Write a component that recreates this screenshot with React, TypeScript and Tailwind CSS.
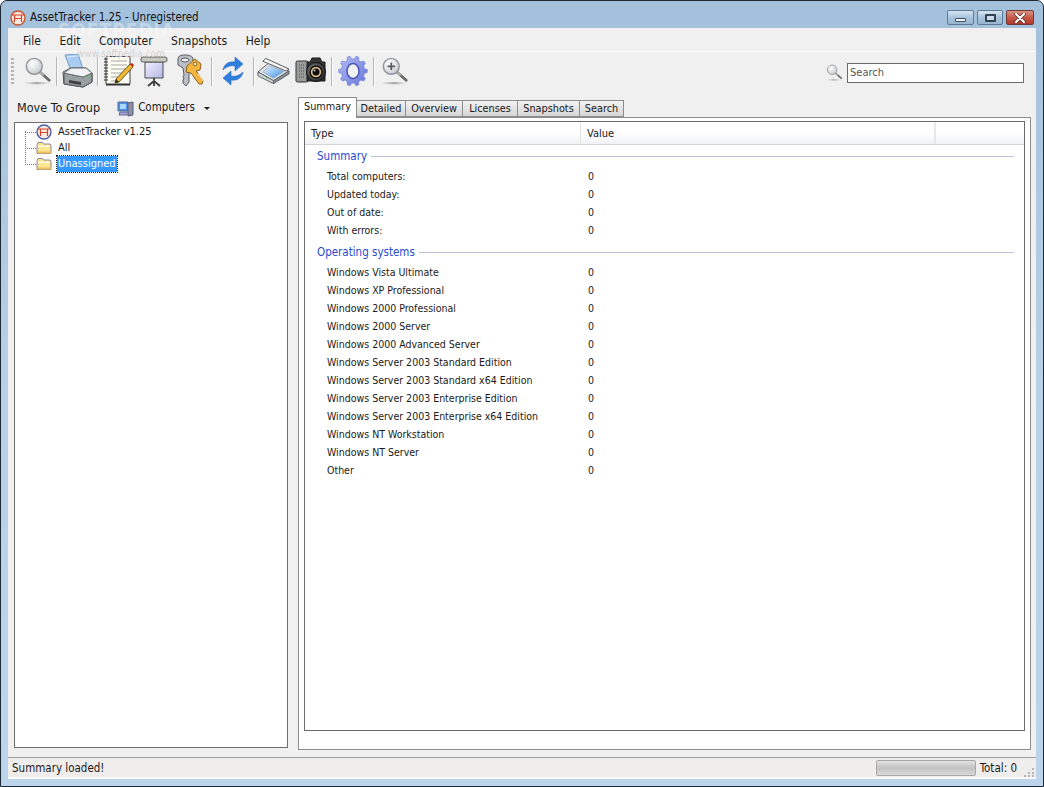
import type { ReactNode } from "react";

const summaryRows = ["Total computers:", "Updated today:", "Out of date:", "With errors:"];
const osRows = [
  "Windows Vista Ultimate",
  "Windows XP Professional",
  "Windows 2000 Professional",
  "Windows 2000 Server",
  "Windows 2000 Advanced Server",
  "Windows Server 2003 Standard Edition",
  "Windows Server 2003 Standard x64 Edition",
  "Windows Server 2003 Enterprise Edition",
  "Windows Server 2003 Enterprise x64 Edition",
  "Windows NT Workstation",
  "Windows NT Server",
  "Other",
];
const tabs = [
  { label: "Detailed", w: "w-[49px]" },
  { label: "Overview", w: "w-[57px]" },
  { label: "Licenses", w: "w-[55px]" },
  { label: "Snapshots", w: "w-[62px]" },
  { label: "Search", w: "w-[44px]" },
];

// gear outline, 10 teeth
const gearPath = (() => {
  const pts: string[] = [];
  const n = 10;
  for (let i = 0; i < n; i++) {
    const a = (i / n) * Math.PI * 2;
    const step = (Math.PI * 2) / n;
    [
      [a - step * 0.3, 12.2],
      [a - step * 0.16, 15],
      [a + step * 0.16, 15],
      [a + step * 0.3, 12.2],
    ].forEach(([ang, r]) => {
      pts.push(`${(15 + Math.cos(ang) * r * 0.95).toFixed(1)} ${(16 + Math.sin(ang) * r).toFixed(1)}`);
    });
  }
  return "M" + pts.join("L") + "z";
})();

function Logo({ ring }: { ring: string }) {
  return (
    <svg width="16" height="16" viewBox="0 0 16 16">
      <circle cx="8" cy="8" r="7" fill="#f8eadf" stroke={ring} strokeWidth="1.400" />
      <path d="M1.500 5h13M4.500 5v7M11.500 5v7M4.500 8.500h7" stroke="#d8432b" strokeWidth="1.200" fill="none" />
    </svg>
  );
}

function Folder() {
  return (
    <svg width="16" height="14" viewBox="0 0 16 14">
      <path d="M1 3.500 2 1.500h4.500l1 1.500H14l1 1v8.500H1z" fill="#fbe58f" stroke="#8d84a8" />
      <path d="M2 4.500h12v1.500H2z" fill="#fffbe0" />
      <path d="M2 10.500h13v2H2z" fill="#eec25a" />
    </svg>
  );
}

function Magnifier({ plus }: { plus?: boolean }) {
  return (
    <svg width="28" height="32" viewBox="0 0 30 32">
      <defs>
        <radialGradient id={plus ? "lensP" : "lens"} cx="0.35" cy="0.3" r="0.8">
          <stop offset="0" stopColor="#ffffff" />
          <stop offset="1" stopColor="#c4c8cc" />
        </radialGradient>
        <linearGradient id={plus ? "shP" : "sh"} x1="0" x2="1" y1="0" y2="0">
          <stop offset="0" stopColor="#e6e6e6" />
          <stop offset="0.5" stopColor="#a8a8a8" />
          <stop offset="1" stopColor="#ececec" />
        </linearGradient>
      </defs>
      <ellipse cx="14" cy="29" rx="13" ry="1.200" fill={`url(#${plus ? "shP" : "sh"})`} />
      <path d="M17 17 27 26" stroke="#6d6a66" strokeWidth="3" strokeLinecap="round" />
      <path d="M17 17 21 20.600" stroke="#b9b6b2" strokeWidth="2" />
      <circle cx="11" cy="11" r="8.500" fill={`url(#${plus ? "lensP" : "lens"})`} stroke="#8f9499" strokeWidth="1.500" />
      {plus && <path d="M7 11h8M11 7v8" stroke="#55585c" strokeWidth="1.800" />}
    </svg>
  );
}

function Printer() {
  return (
    <svg width="31" height="34" viewBox="0 0 31 34">
      <path d="M3 1 16 0l5 15-12 2z" fill="#a9cdf2" stroke="#7e9cc0" />
      <path d="M5 3 15 2" stroke="#dcecff" />
      <path d="M1 18 9 14h15l6 5v9l-9 5-19-3z" fill="#dfe2e4" stroke="#4d5154" />
      <path d="M2 19 21 23l9-4v9l-9 5-19-3z" fill="#9aa1a4" stroke="#4d5154" />
      <path d="M2 19 21 23l9-4-6-5H9z" fill="#f1f3f4" stroke="#6d7174" />
      <path d="M7 26 19 28v3L7 29z" fill="#3d4143" />
      <circle cx="26" cy="23" r="1" fill="#58c95c" />
    </svg>
  );
}

function Notebook() {
  return (
    <svg width="32" height="32" viewBox="0 0 32 32">
      <rect x="3" y="1.500" width="24" height="28" rx="1" fill="#fdfdf5" stroke="#3e3e3e" />
      <path d="M3 29.500h24" stroke="#333" strokeWidth="2" />
      <path d="M8 6h16M8 10h16M8 14h16M8 18h12M8 22h8M8 26h6" stroke="#a5a59a" />
      <path d="M1 4h4M1 7h4M1 10h4M1 13h4M1 16h4M1 19h4M1 22h4M1 25h4" stroke="#333" strokeWidth="1.200" />
      <path d="M13 24 27 9l3 3-14 15-4 1z" fill="#f0b833" stroke="#6a5120" />
      <path d="M27 9l3 3 1-2-2-2z" fill="#d6262c" />
      <path d="M13 24l-1 4 4-1z" fill="#33302a" />
    </svg>
  );
}

function Presentation() {
  return (
    <svg width="28" height="32" viewBox="0 0 28 32">
      <defs>
        <linearGradient id="screen" x1="0" x2="1" y1="0" y2="1">
          <stop offset="0" stopColor="#f0f0ff" />
          <stop offset="1" stopColor="#b6b8e8" />
        </linearGradient>
      </defs>
      <path d="M5 7h18v16H5z" fill="url(#screen)" stroke="#4a4a4a" />
      <rect x="1" y="2" width="26" height="5" rx="2" fill="#c8c9c0" stroke="#5c5c54" />
      <path d="M14 23v3M14 26l-6 5M14 26l6 5M14 26v5" stroke="#3c3c3c" strokeWidth="1.800" fill="none" />
    </svg>
  );
}

function Keys() {
  return (
    <svg width="30" height="34" viewBox="0 0 30 34">
      <path d="M2 5c0-3 3-4 7-4s8 1 8 4v8l-4 3v12l-3 4-3-3v-3l1-1-1-2 1-2-1-7-5-3z" fill="#bcc0c6" stroke="#565a60" />
      <ellipse cx="9" cy="6" rx="4" ry="2" fill="#eceef0" stroke="#565a60" />
      <path d="M11 12 19 5l6 5-1 6-4 1 7 10-1 3-3 0-8-11-5-1z" fill="#f4b63e" stroke="#8a6118" />
      <circle cx="19" cy="10" r="1.800" fill="#fff3cf" stroke="#8a6118" />
      <path d="M22 20l5 7" stroke="#ffe29a" />
    </svg>
  );
}

function Sync() {
  return (
    <svg width="22" height="28" viewBox="0 0 22 28">
      <path d="M1 13C2 7 7 4 13 5V0l8 7-8 7V9C8 8 4 10 1 13z" fill="#2f7fe0" stroke="#1e5fb8" strokeWidth="0.500" />
      <path d="M21 15c-1 6-6 9-12 8v5l-8-7 8-7v5c5 1 9-1 12-4z" fill="#2f7fe0" stroke="#1e5fb8" strokeWidth="0.500" />
    </svg>
  );
}

function Scanner() {
  return (
    <svg width="33" height="26" viewBox="0 0 34 26">
      <defs>
        <linearGradient id="glass" x1="0" x2="1" y1="0" y2="1">
          <stop offset="0" stopColor="#e8f4ff" />
          <stop offset="1" stopColor="#3f92e4" />
        </linearGradient>
      </defs>
      <path d="M1 14 13 4l20 9-16 10z" fill="#e4e6e8" stroke="#5a6068" />
      <path d="M6 14 13 7.500l15 6-11 7z" fill="url(#glass)" stroke="#7d8a98" strokeWidth="0.500" />
      <path d="M6 3 9 0l24 11-3 2z" fill="#f3f4f4" stroke="#55585c" />
      <path d="M1 14l16 9v3L1 18z" fill="#d4d7da" stroke="#5a6068" />
      <path d="M17 23l16-10v3L17 26z" fill="#8d9196" stroke="#5a6068" />
      <circle cx="10" cy="20" r="0.800" fill="#4ecb55" />
    </svg>
  );
}

function Camera() {
  return (
    <svg width="32" height="28" viewBox="0 0 32 28">
      <defs>
        <radialGradient id="cam" cx="0.4" cy="0.4" r="0.7">
          <stop offset="0" stopColor="#8d8d8d" />
          <stop offset="1" stopColor="#1c1c1c" />
        </radialGradient>
      </defs>
      <rect x="1" y="4" width="12" height="21" rx="1.500" fill="#9a9c9a" stroke="#333" />
      <path d="M4 8h6M4 11h6M4 14h6M4 17h6M4 20h6" stroke="#4c4c4c" strokeDasharray="1 1" />
      <path d="M12 5h3l2-4h8l2 4h3v19H12z" fill="#353535" stroke="#1b1b1b" />
      <circle cx="21" cy="15" r="9.500" fill="url(#cam)" stroke="#111" />
      <circle cx="21" cy="15" r="6" fill="#d4b886" stroke="#101010" strokeWidth="1.500" />
      <circle cx="21" cy="15" r="3.500" fill="#0e0e0e" />
      <circle cx="19.500" cy="13.500" r="1" fill="#b8c8d8" />
    </svg>
  );
}

function Gear() {
  return (
    <svg width="30" height="32" viewBox="0 0 30 32">
      <defs>
        <linearGradient id="gear" x1="0" x2="1" y1="0" y2="1">
          <stop offset="0" stopColor="#b4bef6" />
          <stop offset="1" stopColor="#6674d6" />
        </linearGradient>
      </defs>
      <path d={gearPath} fill="url(#gear)" stroke="#7480d8" strokeWidth="0.800" />
      <ellipse cx="15" cy="16" rx="6" ry="7.500" fill="#f2f2f2" stroke="#4a55b4" strokeWidth="1.500" />
    </svg>
  );
}

function Sep() {
  return <div className="w-[2px] h-[29px] border-l border-[#b5b5b5] bg-white" />;
}

function ToolBtn({ w, children }: { w: string; children: ReactNode }) {
  return <div className={`${w} h-[36px] flex items-center justify-center`}>{children}</div>;
}

function WinButton({ w, red, children }: { w: string; red?: boolean; children: ReactNode }) {
  return (
    <div
      className={`${w} h-[15px] rounded-[2px] border flex items-center justify-center ${
        red
          ? "border-[#6e3a36] bg-gradient-to-b from-[#dc9284] via-[#c65a4b] to-[#b23a2d]"
          : "border-[#5e7b96] bg-gradient-to-b from-[#d6e4f1] via-[#a9c4dc] to-[#97b6d2]"
      }`}
    >
      {children}
    </div>
  );
}

function Group({ label, rows, className }: { label: string; rows: string[]; className: string }) {
  return (
    <>
      <div className={`${className} h-[23px] flex items-center pl-[12px] pr-[10px]`}>
        <span className="text-[#2a4bd0] text-[11.500px]">{label}</span>
        <div className="flex-1 ml-[4px] border-t border-[#b9c4da]" />
      </div>
      {rows.map((r) => (
        <div key={r} className="h-[18px] flex items-center text-[10.500px]">
          <span className="w-[283px] pl-[22px]">{r}</span>
          <span>0</span>
        </div>
      ))}
    </>
  );
}

export default function App() {
  return (
    <div className="relative w-[1044px] h-[787px] overflow-hidden bg-white font-['DejaVu_Sans_Condensed','Liberation_Sans',sans-serif] text-[11px] text-[#1a1a1a]">
      <div className="w-full h-full flex flex-col rounded-t-[7px] border border-[#1d2a33] bg-gradient-to-b from-[#a3c0dc] via-[#b9d1e8] to-[#bcd5ec] px-[7px] pb-[7px]">
        {/* Title bar */}
        <div className="h-[27px] flex items-center shrink-0 pl-[2px] pt-[6px]">
          <Logo ring="#c9552c" />
          <span className="ml-[4px] mt-px text-[11.500px] text-[#111]">AssetTracker 1.25 - Unregistered</span>
          <div className="ml-auto flex items-start gap-[3px] mr-[2px]">
            <WinButton w="w-[27px]">
              <div className="w-[11px] h-[4px] mt-[5px] bg-[#eef3f8] border border-[#40505e] rounded-[1px]" />
            </WinButton>
            <WinButton w="w-[26px]">
              <div className="w-[11px] h-[8px] bg-[#c8dcec] border-2 border-[#33444f] rounded-[1px]" />
            </WinButton>
            <WinButton w="w-[28px]" red>
              <svg width="12" height="10" viewBox="0 0 12 10">
                <path d="M2 1l8 8M10 1 2 9" stroke="#40231f" strokeWidth="3.400" strokeLinecap="round" />
                <path d="M2 1l8 8M10 1 2 9" stroke="#ffffff" strokeWidth="2.200" strokeLinecap="round" />
              </svg>
            </WinButton>
          </div>
        </div>

        {/* Client area */}
        <div className="flex-1 flex flex-col bg-[#f0f0f0] min-h-0">
          <div className="h-[23px] shrink-0 flex items-center pl-[15px] pt-[2px] gap-[18.500px] text-[12px] text-[#1a1a1a]">
            <span>File</span>
            <span>Edit</span>
            <span>Computer</span>
            <span>Snapshots</span>
            <span>Help</span>
          </div>
          <div className="h-px bg-white shrink-0" />

          {/* Toolbar */}
          <div className="h-[38px] shrink-0 flex items-center pl-[3px]">
            <div className="w-[3px] h-[26px] mr-[5px] bg-[repeating-linear-gradient(to_bottom,#b4b4b4_0,#b4b4b4_2px,transparent_2px,transparent_4px)]" />
            <ToolBtn w="w-[37px]"><Magnifier /></ToolBtn>
            <Sep />
            <ToolBtn w="w-[39px]"><Printer /></ToolBtn>
            <Sep />
            <ToolBtn w="w-[39px]"><Notebook /></ToolBtn>
            <ToolBtn w="w-[32px]"><Presentation /></ToolBtn>
            <ToolBtn w="w-[41px]"><Keys /></ToolBtn>
            <Sep />
            <ToolBtn w="w-[40px]"><Sync /></ToolBtn>
            <Sep />
            <ToolBtn w="w-[36px]"><Scanner /></ToolBtn>
            <ToolBtn w="w-[40px]"><Camera /></ToolBtn>
            <Sep />
            <ToolBtn w="w-[40px]"><Gear /></ToolBtn>
            <Sep />
            <ToolBtn w="w-[39px]"><Magnifier plus /></ToolBtn>
            <div className="ml-auto flex items-center mr-[12px] mt-[3px] gap-[3px]">
              <div className="w-[18px] h-[20px] overflow-hidden">
                <div className="origin-top-left scale-[0.6]"><Magnifier /></div>
              </div>
              <div className="w-[177px] h-[20px] border border-[#6b6b6b] bg-white pl-[2px] pt-px flex items-center text-[#555]">Search</div>
            </div>
          </div>

          {/* Main */}
          <div className="flex-1 flex min-h-0 pl-[6px] pr-[5px]">
            {/* Left side */}
            <div className="w-[274px] shrink-0 flex flex-col">
              <div className="h-[32px] flex items-center pl-[3px] pt-[4px] shrink-0">
                <span className="text-[12.500px]">Move To Group</span>
                <svg className="ml-[17px]" width="17" height="17" viewBox="0 0 17 17">
                  <path d="M1 2h10v9H1z" fill="#4a90e8" stroke="#5a6d90" />
                  <path d="M3 4h6v5H3z" fill="#a8d8fa" />
                  <path d="M11 3l5-1v13l-5 1z" fill="#8d90a8" stroke="#5a5d78" />
                  <path d="M3 12h7l2 3H2z" fill="#a8a6d0" stroke="#6a68a0" />
                </svg>
                <span className="ml-[4px] -mt-px text-[11.500px]">Computers</span>
                <div className="ml-[9px] w-0 h-0 border-l-[3px] border-r-[3px] border-t-[3px] border-l-transparent border-r-transparent border-t-[#222]" />
              </div>
              <div className="relative flex-1 border border-[#6f6f6f] bg-white pl-[10px]">
                <div className="absolute left-[10px] top-[8px] h-[32px] border-l border-dotted border-[#777]" />
                <div className="h-[17px] pt-px flex items-center">
                  <div className="w-[11px] border-t border-dotted border-[#777]" />
                  <Logo ring="#4a5aa8" />
                  <span className="ml-[6px]">AssetTracker v1.25</span>
                </div>
                <div className="h-[16px] flex items-center">
                  <div className="w-[11px] border-t border-dotted border-[#777]" />
                  <Folder />
                  <span className="ml-[6px]">All</span>
                </div>
                <div className="h-[16px] flex items-center">
                  <div className="w-[11px] border-t border-dotted border-[#777]" />
                  <Folder />
                  <span className="ml-[5px] bg-[#3399ff] text-white px-px outline-1 outline-dotted outline-[#222]">Unassigned</span>
                </div>
              </div>
              <div className="h-[9px] shrink-0" />
            </div>

            {/* Right side */}
            <div className="flex-1 flex flex-col min-w-0 ml-[10px]">
              <div className="h-[20px] mt-[7px] flex items-end shrink-0 relative z-10 text-[10.800px]">
                <div className="h-[21px] w-[59px] border border-b-0 border-[#8c8c8c] bg-white flex items-center justify-center -mb-px pb-px">Summary</div>
                {tabs.map((t) => (
                  <div
                    key={t.label}
                    className={`${t.w} h-[17px] border border-l-0 border-[#8c8c8c] bg-gradient-to-b from-[#f2f2f2] to-[#d6d6d6] pt-px flex items-center justify-center`}
                  >
                    {t.label}
                  </div>
                ))}
              </div>
              <div className="flex-1 border border-[#8c8c8c] bg-white pt-[3px] pl-[5px] pr-[5px] pb-[18px] flex min-h-0 mb-[7px]">
                <div className="flex-1 border border-[#6b6b6b] bg-white flex flex-col">
                  <div className="h-[23px] shrink-0 flex border-b border-[#d5d5d5] bg-gradient-to-b from-white via-white to-[#f1f2f4]">
                    <div className="w-[276px] border-r border-[#e2e2e2] pl-[6px] pt-[3px] flex items-center">Type</div>
                    <div className="w-[355px] border-r-2 border-[#e8e8e8] pl-[6px] pt-[3px] flex items-center">Value</div>
                  </div>
                  <Group label="Summary" rows={summaryRows} className="" />
                  <Group label="Operating systems" rows={osRows} className="mt-px" />
                </div>
              </div>
            </div>
          </div>

          {/* Status bar */}
          <div className="relative h-[22px] shrink-0 flex items-center border-t border-[#a0a0a0] border-b-2 border-b-[#fafafa] bg-[#f0eded] pl-[4px] pt-[2px] text-[11.500px]">
            <span>Summary loaded!</span>
            <div className="ml-auto -mt-[2px] w-[100px] h-[16px] rounded-[2px] border border-[#a8a8a8] bg-gradient-to-b from-[#e4e4e4] via-[#c2c2c2] to-[#d8d8d8]" />
            <span className="ml-[4px] mr-[19px]">Total: 0</span>
            <svg className="absolute right-[1px] bottom-0" width="12" height="10" viewBox="0 0 12 10">
              <path d="M9 1h2v2H9zM5 5h2v2H5zM9 5h2v2H9zM1 8h2v2H1zM5 8h2v2H5zM9 8h2v2H9z" fill="#b5b5b5" />
            </svg>
          </div>
        </div>
      </div>

      {/* watermark */}
      <div className="absolute left-[58px] top-[21px] text-[19px] leading-none tracking-[1px] text-white/35 font-bold pointer-events-none">SOFTPEDIA</div>
      <div className="absolute left-[77px] top-[49px] text-[10px] leading-none text-[#d2d2d2] pointer-events-none">www.softpedia.com</div>
    </div>
  );
}
